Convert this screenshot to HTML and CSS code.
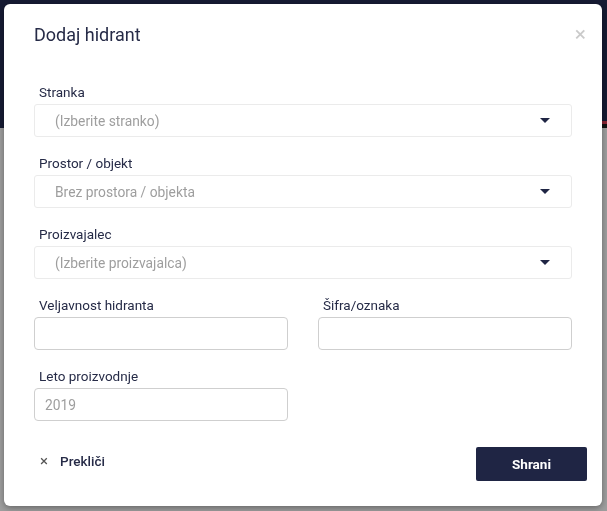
FILE: index.html
```html
<!DOCTYPE html>
<html lang="sl">
<head>
<meta charset="utf-8">
<title>Dodaj hidrant</title>
<link rel="stylesheet" href="styles.css">
</head>
<body>
<div class="page">
  <header class="topbar">
    <div class="topbar-line"></div>
  </header>
  <main class="page-body"></main>
</div>
<div class="modal">
  <div class="modal-header">
    <h1 class="modal-title">Dodaj hidrant</h1>
    <span class="modal-close">×</span>
  </div>
  <form class="modal-body">
    <div class="field">
      <label class="field-label">Stranka</label>
      <div class="select"><span class="placeholder">(Izberite stranko)</span><span class="caret"></span></div>
    </div>
    <div class="field">
      <label class="field-label">Prostor / objekt</label>
      <div class="select"><span class="placeholder">Brez prostora / objekta</span><span class="caret"></span></div>
    </div>
    <div class="field">
      <label class="field-label">Proizvajalec</label>
      <div class="select"><span class="placeholder">(Izberite proizvajalca)</span><span class="caret"></span></div>
    </div>
    <div class="row">
      <div class="field">
        <label class="field-label">Veljavnost hidranta</label>
        <div class="input"></div>
      </div>
      <div class="field">
        <label class="field-label">Šifra/oznaka</label>
        <div class="input"></div>
      </div>
    </div>
    <div class="row">
      <div class="field">
        <label class="field-label">Leto proizvodnje</label>
        <div class="input"><span class="placeholder">2019</span></div>
      </div>
      <div class="field"></div>
    </div>
  </form>
  <div class="modal-footer">
    <button type="button" class="btn-cancel"><span class="x">×</span>Prekliči</button>
    <button type="button" class="btn-save">Shrani</button>
  </div>
</div>
</body>
</html>
```
FILE: styles.css
```css
* { box-sizing: border-box; }
html, body { margin: 0; height: 100%; }
body {
  font-family: Roboto, "Noto Sans", sans-serif;
  background: #9b9b9b;
  overflow: hidden;
}
.page { height: 100%; display: flex; flex-direction: column; }
.topbar {
  height: 128px;
  background: #161b33;
  display: flex;
  flex-direction: column;
  justify-content: flex-end;
}
.topbar-line {
  height: 7px;
  margin-left: 500px;
  border-top: 3px solid #8a2433;
  background: #111;
}
.page-body { flex: 1; background: #9e9e9e; }
.modal {
  position: fixed;
  left: 4px; top: 4px;
  width: 598px; height: 502px;
  background: #fff;
  border-radius: 6px;
  box-shadow: 0 2px 6px rgba(0,0,0,0.35);
  display: flex;
  flex-direction: column;
}
.modal-header {
  display: flex;
  justify-content: space-between;
  align-items: flex-start;
  padding: 19px 16px 0 30px;
  height: 60px;
}
.modal-title {
  margin: 0;
  font-size: 18px;
  line-height: 24px;
  font-weight: 400;
  color: #262b47;
}
.modal-close {
  font-size: 21px;
  line-height: 22px;
  color: #cacaca;
  margin-top: 0;
}
.modal-body {
  margin: 0;
  padding: 19px 30px 0 30px;
  display: flex;
  flex-direction: column;
  gap: 17px;
}
.field { display: flex; flex-direction: column; gap: 3px; flex: 1; }
.field-label {
  font-size: 13.5px;
  line-height: 18px;
  color: #262b47;
  padding-left: 5px;
}
.select {
  height: 33px;
  border: 1px solid #ebebeb;
  border-radius: 3px;
  display: flex;
  align-items: center;
  justify-content: space-between;
  padding: 0 21px 0 20px;
}
.placeholder { font-size: 13.8px; color: #9e9e9e; }
.caret {
  width: 0; height: 0;
  border-left: 5px solid transparent;
  border-right: 5px solid transparent;
  border-top: 5px solid #1f2544;
}
.row { display: flex; gap: 30px; }
.input {
  height: 33px;
  border: 1px solid #cfcfcf;
  border-radius: 4px;
  display: flex;
  align-items: center;
  padding: 0 10px;
}
.modal-footer {
  margin-top: auto;
  display: flex;
  align-items: center;
  justify-content: space-between;
  padding: 0 15px 25px 36px;
}
.btn-cancel {
  border: 0;
  background: none;
  padding: 0;
  margin-bottom: 7px;
  font-family: inherit;
  font-size: 13.5px;
  font-weight: 500;
  color: #262b47;
  display: flex;
  align-items: center;
  gap: 12px;
}
.btn-cancel .x { font-size: 15px; color: #555; font-weight: 400; }
.btn-save {
  width: 111px;
  height: 34px;
  border: 0;
  border-radius: 2px;
  background: #1f2544;
  color: #fff;
  font-family: inherit;
  font-size: 13.5px;
  font-weight: 700;
}
```
